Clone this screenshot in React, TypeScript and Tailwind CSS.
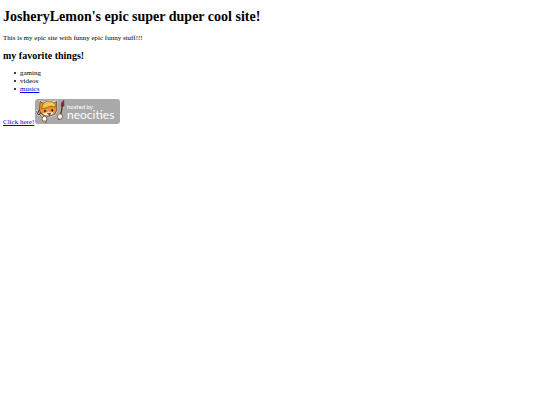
function NeocitiesBadge() {
  return (
    <svg
      viewBox="0 0 85 25"
      className="h-[25px] w-[85px] font-['Lato',sans-serif]"
      role="img"
      aria-label="hosted by neocities"
    >
      <rect width="85" height="25" rx="3" fill="#a9a9a9" />

      {/* thin white outline behind the cat and its tools */}
      <g fill="none" stroke="#fff" strokeWidth="2" strokeLinejoin="round" strokeLinecap="round" opacity="0.7">
        <path d="M5 2.500 9 4 14 1.800 18 3 21.500 2.500 22 11 19 16 13 17.500 8 16.500 5 12Z" />
        <path d="M2 12 3 15.500 5.500 15 5 11.500M4.500 15.500 8 19.500" />
        <path d="M28 3 27.500 8 25.500 15" />
      </g>

      {/* fork */}
      <path
        d="M1.800 12.500 3 15.800 6 14.500 5 11.500M3.300 11.800 4.500 15.500 10 22"
        fill="none"
        stroke="#3a3634"
        strokeWidth="0.9"
        strokeLinecap="round"
      />

      {/* cat head with the yellow helmet */}
      <path
        d="M5 2.500 9 4.500 18.500 4.500 21.500 2.500 22 11 19.500 15.500 13 17.500 7.500 16 4.500 12Z"
        fill="#ee9333"
        stroke="#50341d"
        strokeWidth="0.8"
        strokeLinejoin="round"
      />
      <path
        d="M6.500 10C7 5.500 9.500 2 14 2c4 0 6.500 2.500 7 6L15 7.500 11 9Z"
        fill="#edbd3b"
        stroke="#80551d"
        strokeWidth="0.7"
      />
      <path d="M9 7C12 4.500 16 4.500 19.500 6" fill="none" stroke="#f9df78" strokeWidth="0.8" />
      <path d="M8 14.500 10.500 14 13.500 12.500 16.500 13.500 18.500 13.500 17 15.500 13 16.500 9.500 16Z" fill="#fff" />
      <ellipse cx="10" cy="12" rx="0.9" ry="1.200" fill="#241c18" />
      <ellipse cx="17.300" cy="11.200" rx="0.9" ry="1.200" fill="#241c18" />
      <path d="M12 14.200 16 14 14.500 16.500Z" fill="#a94530" stroke="#42301f" strokeWidth="0.5" />

      {/* brush */}
      <path d="M27.500 7 25.500 16" stroke="#4f3528" strokeWidth="1.500" />
      <path d="M28.800 1.500C26.500 3 26 5 26.500 7.500L28.800 7Z" fill="#a3202c" stroke="#571820" strokeWidth="0.7" />

      {/* paws */}
      <ellipse cx="9.500" cy="20" rx="2.500" ry="2.700" fill="#fff" stroke="#63452c" strokeWidth="0.8" />
      <ellipse cx="25" cy="17.500" rx="2.500" ry="2.700" fill="#fff" stroke="#63452c" strokeWidth="0.8" />
      <path d="M8 22 11 21.800M23 15.800 24.500 15" stroke="#e08c35" strokeWidth="0.9" />
      <path d="M10.500 23 11.500 24M24 20 23.500 21" stroke="#3a3634" strokeWidth="0.9" />

      <text x="32" y="10" fontSize="6" fill="#fff">
        hosted by
      </text>
      <text x="32" y="20" fontSize="12" fill="#fff">
        neocities
      </text>
    </svg>
  );
}

const bullet = "flex items-center gap-1 before:size-[2px] before:rounded-full before:bg-black";

export default function App() {
  return (
    <main className="bg-white px-[3px] pt-[9px] font-['Liberation_Serif',serif] text-[7px] leading-[8px] text-black">
      <h1 className="text-[14px] leading-4 font-bold">JosheryLemon's epic super duper cool site!</h1>
      <p className="mt-[9px]">This is my epic site with funny epic funny stuff!!!</p>
      <h2 className="mt-2 text-[10px] leading-3 font-bold">my favorite things!</h2>
      <ul className="mt-[7px] pl-[11px]">
        <li className={bullet}>gaming</li>
        <li className={bullet}>videos</li>
        <li className={bullet}>
          <a href="#musics" className="text-[#0000ee] underline">
            musics
          </a>
        </li>
      </ul>
      <div className="mt-[6px] flex items-baseline gap-px">
        <a href="#click" className="text-[#0000ee] underline">
          Click here!
        </a>
        <NeocitiesBadge />
      </div>
    </main>
  );
}
